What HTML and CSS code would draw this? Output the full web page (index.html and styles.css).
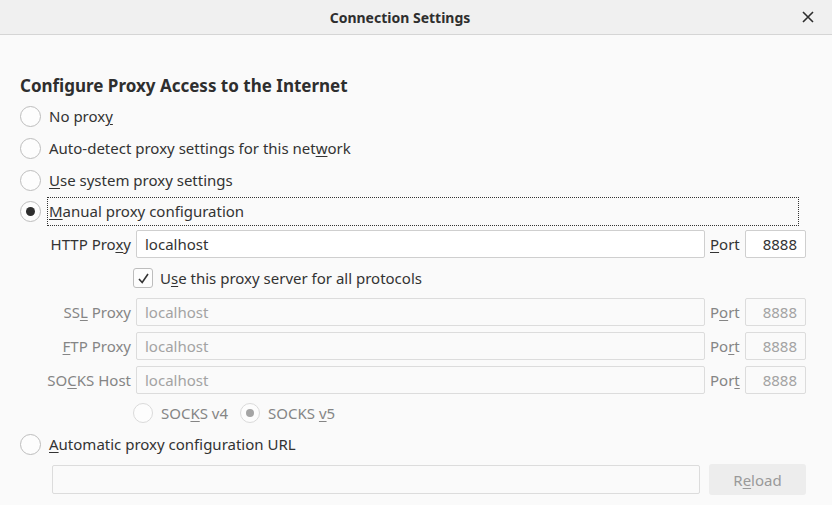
FILE: index.html
```
<!DOCTYPE html>
<html lang="en">
<head>
<meta charset="utf-8">
<title>Connection Settings</title>
<link rel="stylesheet" href="styles.css">
</head>
<body>
<div class="dialog">
  <header class="titlebar">
    <span class="title">Connection Settings</span>
    <span class="close" aria-label="Close">
      <svg width="12" height="12" viewBox="0 0 12 12"><path d="M1 1 L11 11 M11 1 L1 11" stroke="#2e2e2e" stroke-width="1.6" fill="none"/></svg>
    </span>
  </header>
  <main class="content">
    <h1 class="heading">Configure Proxy Access to the Internet</h1>

    <div class="radio-row"><span class="radio"></span><span class="rlabel">No prox<u>y</u></span></div>
    <div class="radio-row"><span class="radio"></span><span class="rlabel">Auto-detect proxy settings for this net<u>w</u>ork</span></div>
    <div class="radio-row"><span class="radio"></span><span class="rlabel"><u>U</u>se system proxy settings</span></div>
    <div class="radio-row short"><span class="radio checked"></span><span class="rlabel focus"><u>M</u>anual proxy configuration</span></div>

    <div class="proxy-grid">
      <label class="plabel">HTTP Pro<u>x</u>y</label>
      <div class="field">localhost</div>
      <label class="portlabel"><u>P</u>ort</label>
      <div class="field port">8888</div>

      <div class="check-row">
        <span class="checkbox"><svg width="13" height="13" viewBox="0 0 13 13"><path d="M2 7 L5.2 10.5 L11 2" stroke="#333" stroke-width="1.6" fill="none"/></svg></span>
        <span>U<u>s</u>e this proxy server for all protocols</span>
      </div>

      <label class="plabel dis">SS<u>L</u> Proxy</label>
      <div class="field dis">localhost</div>
      <label class="portlabel dis">P<u>o</u>rt</label>
      <div class="field port dis">8888</div>

      <label class="plabel dis"><u>F</u>TP Proxy</label>
      <div class="field dis">localhost</div>
      <label class="portlabel dis">Po<u>r</u>t</label>
      <div class="field port dis">8888</div>

      <label class="plabel dis">SO<u>C</u>KS Host</label>
      <div class="field dis">localhost</div>
      <label class="portlabel dis">Por<u>t</u></label>
      <div class="field port dis">8888</div>

      <div class="socks-row">
        <span class="radio small"></span><span class="dis-text">SOC<u>K</u>S v4</span>
        <span class="radio small checked disdot"></span><span class="dis-text">SOCKS <u>v</u>5</span>
      </div>
    </div>

    <div class="radio-row auto"><span class="radio"></span><span class="rlabel"><u>A</u>utomatic proxy configuration URL</span></div>

    <div class="url-row">
      <div class="field url dis"></div>
      <button class="reload">R<u>e</u>load</button>
    </div>
  </main>
</div>
</body>
</html>
```
FILE: styles.css
```
* { box-sizing: border-box; }
html, body { margin: 0; padding: 0; }
body {
  width: 832px;
  height: 505px;
  overflow: hidden;
  background: #fafafa;
  font-family: "Noto Sans", "Open Sans", sans-serif;
  font-size: 15px;
  color: #333;
}
u { text-decoration: underline; text-underline-offset: 2px; text-decoration-thickness: 1px; }

.dialog { display: flex; flex-direction: column; height: 505px; }

.titlebar {
  height: 35px;
  flex: none;
  background: #f0f0f0;
  border-bottom: 1px solid #d5d5d5;
  display: flex;
  align-items: center;
  justify-content: center;
  position: relative;
}
.title { font-weight: bold; font-size: 14px; color: #2e2e2e; margin-right: 32px; }
.close {
  position: absolute;
  right: 18px;
  top: 11px;
  width: 12px;
  height: 12px;
  display: flex;
}

.content { padding: 40px 26px 0 20px; display: flex; flex-direction: column; }

.heading {
  margin: 0 0 3px 0;
  font-size: 17px;
  line-height: 22px;
  font-weight: bold;
  color: #2e2e2e;
}

.radio-row {
  height: 32px;
  display: flex;
  align-items: center;
}
.radio-row.short { height: 31px; }
.radio {
  width: 21px;
  height: 21px;
  flex: none;
  border-radius: 50%;
  border: 1px solid #bdbdbd;
  background: #fdfdfd;
  display: inline-flex;
  align-items: center;
  justify-content: center;
}
.radio.checked::after {
  content: "";
  width: 9px;
  height: 9px;
  border-radius: 50%;
  background: #2e2e2e;
}
.radio.small { width: 20px; height: 20px; border-color: #dadada; }
.radio.disdot::after { background: #a5a5a5; width: 8px; height: 8px; }

.rlabel {
  margin-left: 6px;
  line-height: 26px;
  padding: 0 1px;
  border: 1px dotted transparent;
}
.rlabel.focus {
  flex: 1;
  margin-right: 7px;
  border-color: #333;
  height: 29px;
  line-height: 27px;
}

.proxy-grid {
  display: grid;
  grid-template-columns: 87px 1fr 30px 61px;
  column-gap: 5px;
  row-gap: 6px;
  align-items: center;
  margin: 3px 0 0 24px;
}
.plabel { text-align: right; white-space: nowrap; }
.portlabel { white-space: nowrap; }
.dis { color: #858585; }
.dis-text { color: #858585; }

.field {
  height: 28px;
  background: #fff;
  border: 1px solid #cfcfcf;
  border-radius: 2px;
  padding: 0 8px;
  line-height: 26px;
}
.field.port { text-align: right; }
.field.dis {
  background: #fafafa;
  border-color: #dcdcdc;
  color: #a3a3a3;
}

.check-row {
  grid-column: 2 / 5;
  margin-left: -3px;
  height: 32px;
  display: flex;
  align-items: center;
  margin-top: -2px;
  margin-bottom: -2px;
}
.checkbox {
  width: 20px;
  height: 20px;
  flex: none;
  border: 1px solid #bdbdbd;
  border-radius: 3px;
  background: #fdfdfd;
  display: inline-flex;
  align-items: center;
  justify-content: center;
  margin-right: 7px;
}

.socks-row {
  grid-column: 2 / 5;
  margin-left: -3px;
  height: 26px;
  display: flex;
  align-items: center;
}
.socks-row .dis-text { margin-left: 8px; margin-right: 12px; }

.radio-row.auto { margin-top: 2px; }

.url-row {
  display: flex;
  align-items: center;
  gap: 9px;
  margin: 4px 0 0 32px;
}
.field.url { flex: 1; height: 29px; }
.reload {
  width: 97px;
  height: 31px;
  border: none;
  border-radius: 3px;
  background: #ededed;
  color: #9a9a9a;
  font-family: inherit;
  font-size: 15px;
  padding: 0;
}
```
